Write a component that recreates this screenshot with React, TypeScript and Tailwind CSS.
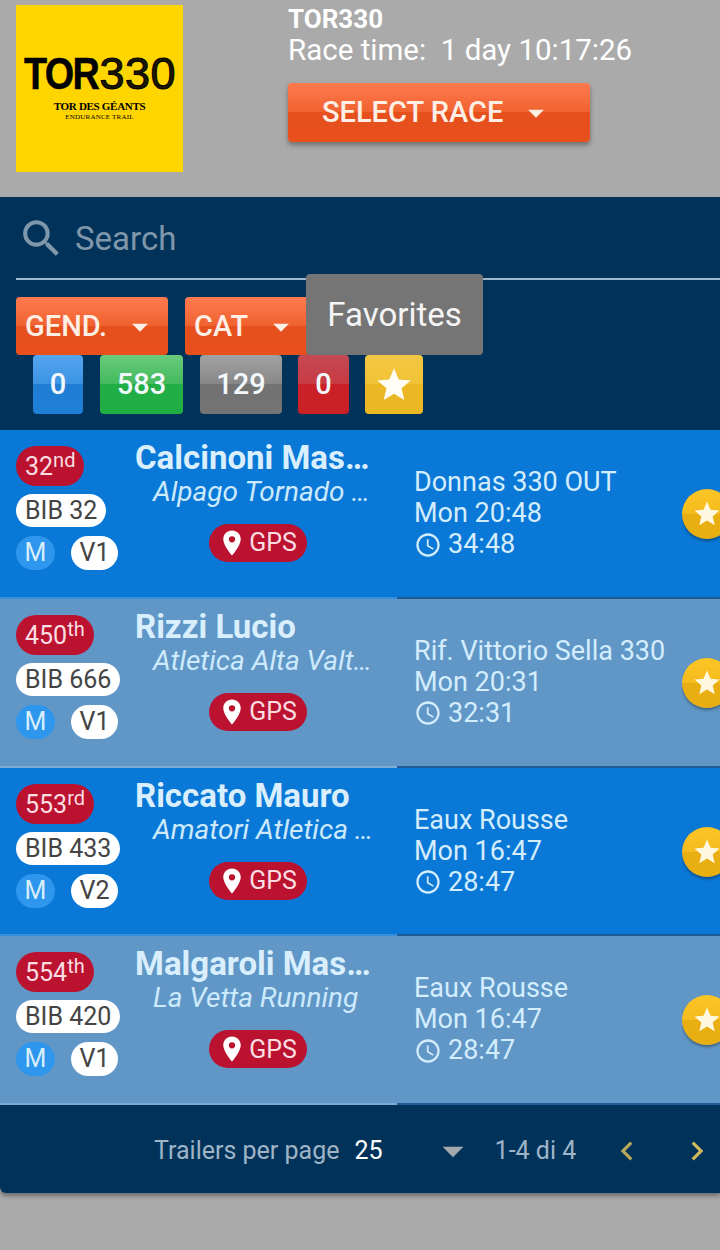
import { MdAccessTime, MdArrowDropDown, MdChevronLeft, MdChevronRight, MdLocationOn, MdSearch, MdStar } from 'react-icons/md';

interface Trailer {
  pos: string;
  suffix: string;
  bib: string;
  cat: string;
  name: string;
  team: string;
  place: string;
  time: string;
  elapsed: string;
}

const TRAILERS: Trailer[] = [
  { pos: '32', suffix: 'nd', bib: 'BIB 32', cat: 'V1', name: 'Calcinoni Mas…', team: 'Alpago Tornado …', place: 'Donnas 330 OUT', time: 'Mon 20:48', elapsed: '34:48' },
  { pos: '450', suffix: 'th', bib: 'BIB 666', cat: 'V1', name: 'Rizzi Lucio', team: 'Atletica Alta Valt…', place: 'Rif. Vittorio Sella 330', time: 'Mon 20:31', elapsed: '32:31' },
  { pos: '553', suffix: 'rd', bib: 'BIB 433', cat: 'V2', name: 'Riccato Mauro', team: 'Amatori Atletica …', place: 'Eaux Rousse', time: 'Mon 16:47', elapsed: '28:47' },
  { pos: '554', suffix: 'th', bib: 'BIB 420', cat: 'V1', name: 'Malgaroli Mas…', team: 'La Vetta Running', place: 'Eaux Rousse', time: 'Mon 16:47', elapsed: '28:47' },
];

const ORANGE = 'bg-[linear-gradient(#ff7a50,#f0622f_50%,#e5501d_50%,#e8501c)]';

function TrailerRow({ t, odd }: { t: Trailer; odd: boolean }) {
  return (
    <div className={odd ? 'bg-[#6097c7]' : 'bg-[#0a78d6]'}>
      <div className="flex h-[166.75px]">
        <div className="w-[135px] shrink-0 pl-4 pt-4 flex flex-col items-start">
          <span className="h-10 px-[9px] rounded-full bg-[#bb1230] text-[#fbdde2] text-[25px] leading-[41px]">
            {t.pos}
            <sup className="text-[20px] leading-none -top-[8px]">{t.suffix}</sup>
          </span>
          <span className="mt-2 h-[33px] px-[9px] rounded-full bg-white text-[#444] text-[25px] leading-[33px]">{t.bib}</span>
          <div className="mt-[9px] flex items-center gap-4">
            <span className="w-[39px] h-[34px] rounded-full bg-[#2e96ed] text-[#d8eefd] text-[25px] leading-[34px] text-center">M</span>
            <span className="w-[47px] h-[34px] rounded-full bg-white text-[#444] text-[25px] leading-[34px] text-center">{t.cat}</span>
          </div>
        </div>
        <div className="w-[262px] shrink-0 pt-[9px]">
          <div className="h-[38px] text-[33px] leading-[38px] font-bold text-[#d9effd] whitespace-nowrap">{t.name}</div>
          <div className="h-[30px] pl-[18px] text-[28px] leading-[30px] italic text-[#cdeafd] whitespace-nowrap">{t.team}</div>
          <div className="mt-[17px] flex justify-center pr-[16px]">
            <span className="h-[38px] w-[98px] rounded-full bg-[#bb1230] text-[#fbdde2] text-[25px] flex items-center justify-center">
              <MdLocationOn className="text-[30px] text-white -ml-[2px] mr-[2px]" />
              GPS
            </span>
          </div>
        </div>
        <div className="flex-1 pl-[17px] pt-[37px] text-[#d4edfd] text-[27px] leading-[31px] whitespace-nowrap">
          <div>{t.place}</div>
          <div>{t.time}</div>
          <div className="flex items-center gap-[6px]">
            <MdAccessTime className="text-[28px]" />
            {t.elapsed}
          </div>
        </div>
        <div className="w-[38px] shrink-0 pt-[59px] overflow-hidden">
          <div className="w-[50px] h-[50px] rounded-full bg-[linear-gradient(#fcc524,#f5bb1e_50%,#e9af12_50%,#e9ae10)] shadow-[0_2px_3px_rgba(0,0,0,0.35)] flex items-center justify-center">
            <MdStar className="text-[30px] text-[#fff8e0]" />
          </div>
        </div>
      </div>
      <div className="flex h-[2px]">
        <div className={odd ? 'w-[397px] bg-[#7cacd6]' : 'w-[397px] bg-[#3a8fdc]'} />
        <div className="flex-1 bg-[#1f5c96]" />
      </div>
    </div>
  );
}

export default function App() {
  return (
    <div className="relative w-[720px] h-[1250px] overflow-hidden bg-[#aaaaaa] font-['Roboto',sans-serif]">
      <header className="h-[197px] flex">
        <div className="ml-4 mt-[5px] w-[167px] h-[167px] bg-[#ffd500] flex flex-col items-center pt-[47px] text-black">
          <div className="h-[44px] w-[152px] flex text-[45px] leading-[44px] font-['Liberation_Sans',sans-serif]">
            <span className="w-[76px] inline-block font-bold origin-left scale-x-[0.84] tracking-[-2px] [-webkit-text-stroke:0.5px_#000]">TOR</span>
            <span className="w-[76px] tracking-[0.5px] text-[#1a1600] [-webkit-text-stroke:1px_#000]">330</span>
          </div>
          <div className="mt-[5px] text-[11px] leading-[10px] font-bold tracking-[-0.3px] font-['Liberation_Serif',serif]">TOR DES GÉANTS</div>
          <div className="mt-[3px] text-[7px] leading-[7px] tracking-[0.2px] font-['Liberation_Serif',serif]">ENDURANCE TRAIL</div>
        </div>
        <div className="ml-[105px] pt-[5px] text-white">
          <div className="text-[26px] leading-[28px] font-bold">TOR330</div>
          <div className="text-[29.5px] leading-[34px] whitespace-pre">Race time:  1 day 10:17:26</div>
          <button className={`mt-[16px] w-[302px] h-[59px] pt-[1px] rounded-[4px] ${ORANGE} shadow-[0_3px_5px_rgba(0,0,0,0.35)] text-[#fdeee6] text-[29px] font-medium flex items-center pl-[34px]`}>
            SELECT RACE
            <MdArrowDropDown className="text-[38px] ml-[14px]" />
          </button>
        </div>
      </header>

      <main className="h-[996px] bg-[#01335a] rounded-bl-[6px] shadow-[0_3px_4px_rgba(0,0,0,0.35)]">
        <div className="ml-4 h-[83px] pt-[2px] border-b-2 border-[#9fb8cc] flex items-center">
          <MdSearch className="text-[49px] text-[#7f97aa] ml-[1px]" />
          <span className="ml-[9px] text-[33px] text-[#7f97aa]">Search</span>
        </div>
        <div className="mt-[17px] pl-4 flex gap-[17px]">
          <button className={`w-[152px] h-[58px] pt-[1px] rounded-[4px] ${ORANGE} text-[#fdeee6] text-[29px] font-medium flex items-center pl-[9px]`}>
            GEND.
            <MdArrowDropDown className="text-[38px] ml-[14px]" />
          </button>
          <button className={`w-[125px] h-[58px] pt-[1px] rounded-[4px] ${ORANGE} text-[#fdeee6] text-[29px] font-medium flex items-center pl-[9px]`}>
            CAT
            <MdArrowDropDown className="text-[38px] ml-[14px]" />
          </button>
        </div>
        <div className="pl-[33px] flex h-[75px] text-[29px] font-medium text-[#f2f8fc]">
          <span className="w-[50px] h-[59px] rounded-[4px] bg-[linear-gradient(#55a6ee,#3b92e4_50%,#1f7ed4_50%,#1f7fd6)] flex items-center justify-center">0</span>
          <span className="ml-[17px] w-[83px] h-[59px] rounded-[4px] bg-[linear-gradient(#69cb7c,#43b95c_50%,#20ae46_50%,#20ae44)] flex items-center justify-center">583</span>
          <span className="ml-[17px] w-[82px] h-[59px] rounded-[4px] bg-[linear-gradient(#a2a2a2,#878787_50%,#727272_50%,#747474)] flex items-center justify-center">129</span>
          <span className="ml-[16px] w-[51px] h-[59px] rounded-[4px] bg-[linear-gradient(#c34a55,#c83a42_50%,#cb2027_50%,#cb2026)] flex items-center justify-center">0</span>
          <span className="ml-[16px] w-[58px] h-[59px] rounded-[4px] bg-[linear-gradient(#f2c744,#f0c234_50%,#ebb824_50%,#ebb822)] flex items-center justify-center">
            <MdStar className="text-[40px] text-[#fffdf5]" />
          </span>
        </div>

        {TRAILERS.map((t, i) => (
          <TrailerRow key={t.bib} t={t} odd={i % 2 === 1} />
        ))}

        <div className="h-[88px] pt-[4px] flex items-center text-[25px] text-[#9fb4c6] whitespace-nowrap">
          <span className="ml-[154px]">Trailers per page</span>
          <span className="ml-[15px] text-white">25</span>
          <MdArrowDropDown className="text-[50px] ml-[45px] text-[#a3a9ad]" />
          <span className="ml-[17px]">1-4 di 4</span>
          <MdChevronLeft className="text-[38px] ml-[32px] text-[#b8a85a]" />
          <MdChevronRight className="text-[38px] ml-[32px] text-[#d1bb5a]" />
        </div>
      </main>

      {/* tooltip over the filters */}
      <div className="absolute left-[306px] top-[274px] w-[177px] h-[81px] rounded-[4px] bg-[#757575] text-[#f5f5f5] text-[33px] flex items-center justify-center">
        Favorites
      </div>
    </div>
  );
}
